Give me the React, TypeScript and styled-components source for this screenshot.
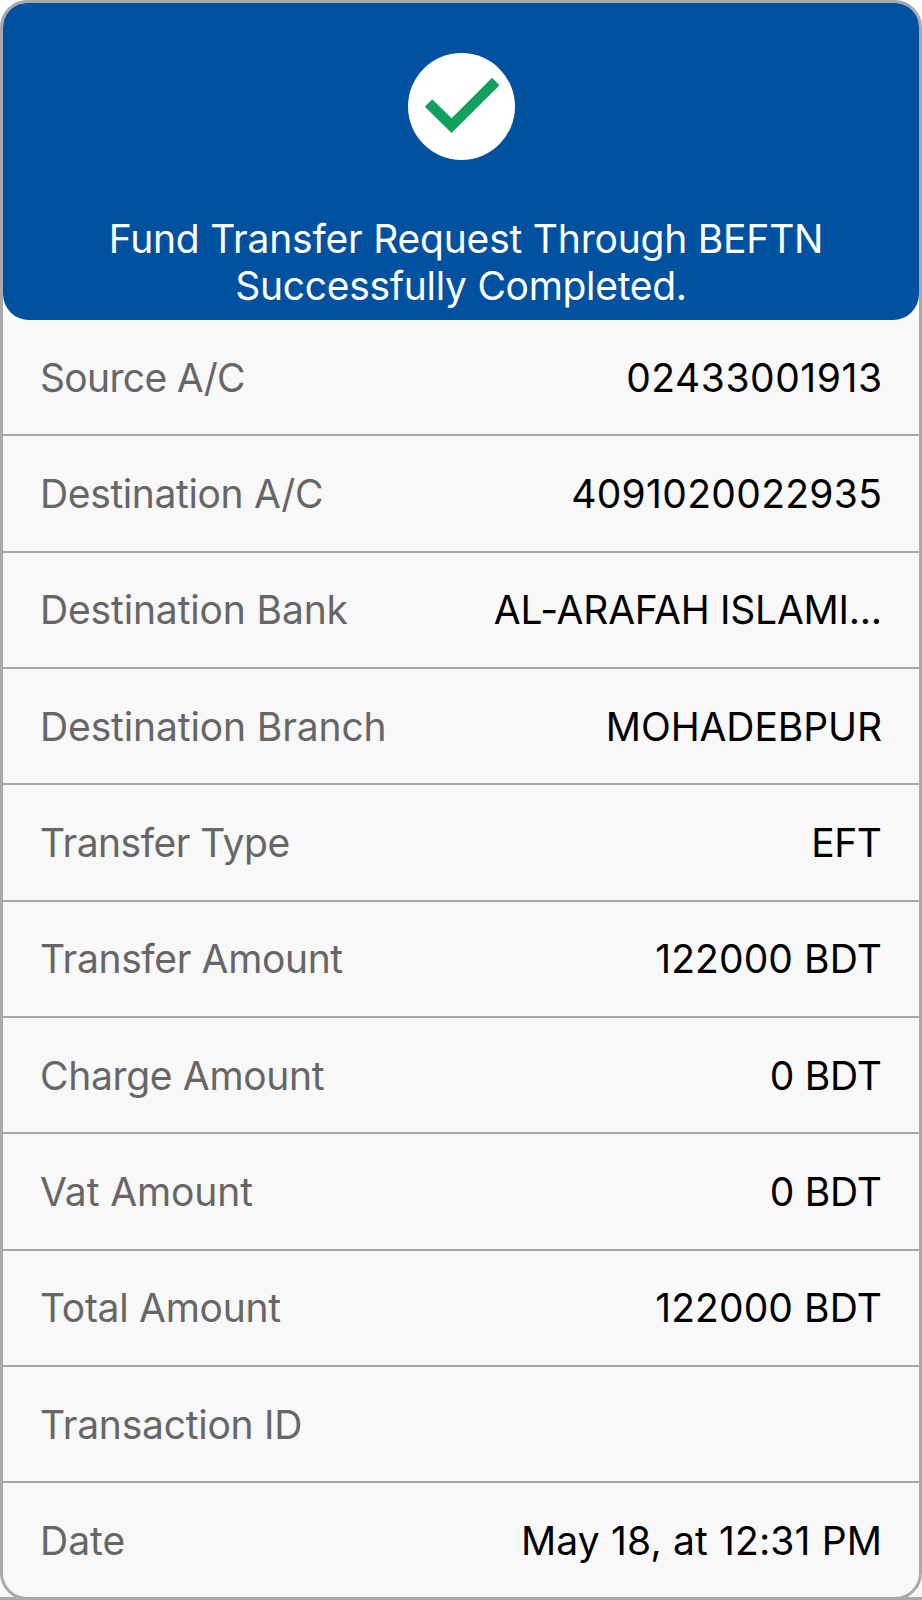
import React from "react";
import styled, { createGlobalStyle } from "styled-components";

const GlobalStyle = createGlobalStyle`
  * { box-sizing: border-box; }
  body { margin: 0; background: #fff; }
`;

const Page = styled.main`
  width: 922px;
  height: 1600px;
  overflow: hidden;
  border-bottom: 3px solid #a9a9a9;
  background: linear-gradient(#fff 50%, #f8f8f8 50%);
  font-family: Inter, "Liberation Sans", sans-serif;
  font-size: 39px;
  font-weight: 400;
`;

const Card = styled.section`
  display: flex;
  flex-direction: column;
  height: 1600px;
  border: 3px solid #a9a9a9;
  border-radius: 27px;
  background: #f8f8f8;
  overflow: hidden;
`;

const HeaderBacking = styled.div`
  flex: none;
  height: 317px;
  background: #fff;
`;

const Header = styled.header`
  display: flex;
  flex-direction: column;
  align-items: center;
  height: 317px;
  padding-top: 50px;
  border-radius: 0 0 26px 26px;
  background: #0052a0;
`;

const StatusIcon = styled.svg`
  display: block;
  width: 107px;
  height: 107px;
`;

const Title = styled.h1`
  margin: 55px 0 0;
  color: #fff;
  font-size: 39px;
  font-weight: 400;
  line-height: 47px;
  text-align: center;
`;

const TitleLine = styled.span<{ $tracking: number; $shift?: number }>`
  display: block;
  letter-spacing: ${(p) => p.$tracking}px;
  padding-left: ${(p) => p.$shift ?? 0}px;
  white-space: nowrap;
`;

const Details = styled.dl`
  flex: 1;
  display: flex;
  flex-direction: column;
  margin: 0;
`;

const Row = styled.div`
  display: flex;
  flex: none;
  align-items: center;
  justify-content: space-between;
  height: 116.33px;
  padding: 1px 37px 0 37px;
  border-bottom: 2px solid #a6a6a6;
  line-height: 48px;

  &:last-child { border-bottom-color: transparent; }
`;

const Label = styled.dt<{ $tracking: number }>`
  color: #666;
  letter-spacing: ${(p) => p.$tracking}px;
  white-space: nowrap;
`;

const Value = styled.dd<{ $tracking: number }>`
  margin: 0 ${(p) => -p.$tracking}px 0 0;
  color: #000;
  letter-spacing: ${(p) => p.$tracking}px;
  white-space: nowrap;
`;

type Detail = { label: string; labelTracking: number; value: string; valueTracking: number };

const details: Detail[] = [
  { label: "Source A/C", labelTracking: -0.68, value: "02433001913", valueTracking: 0.55 },
  { label: "Destination A/C", labelTracking: -0.36, value: "4091020022935", valueTracking: 0.32 },
  { label: "Destination Bank", labelTracking: -0.14, value: "AL-ARAFAH ISLAMI...", valueTracking: -0.25 },
  { label: "Destination Branch", labelTracking: -0.12, value: "MOHADEBPUR", valueTracking: -0.1 },
  { label: "Transfer Type", labelTracking: -0.5, value: "EFT", valueTracking: -0.5 },
  { label: "Transfer Amount", labelTracking: -0.36, value: "122000 BDT", valueTracking: 0.1 },
  { label: "Charge Amount", labelTracking: -0.33, value: "0 BDT", valueTracking: -0.25 },
  { label: "Vat Amount", labelTracking: -0.1, value: "0 BDT", valueTracking: -0.25 },
  { label: "Total Amount", labelTracking: -0.28, value: "122000 BDT", valueTracking: 0.1 },
  { label: "Transaction ID", labelTracking: -0.24, value: "", valueTracking: 0 },
  { label: "Date", labelTracking: 0, value: "May 18, at 12:31 PM", valueTracking: 0.15 },
];

export default function App() {
  return (
    <Page>
      <GlobalStyle />
      <Card>
        <HeaderBacking>
          <Header>
            <StatusIcon viewBox="0 0 107 107" aria-hidden="true">
              <circle cx="53.5" cy="53.5" r="53.5" fill="#fff" />
              <path d="M20.5 50L43.5 72.6L87.8 28.5" fill="none" stroke="#12a05c" strokeWidth="10.5" />
            </StatusIcon>
            <Title>
              <TitleLine $tracking={-0.21} $shift={10}>Fund Transfer Request Through BEFTN</TitleLine>
              <TitleLine $tracking={-0.3}>Successfully Completed.</TitleLine>
            </Title>
          </Header>
        </HeaderBacking>
        <Details>
          {details.map((d) => (
            <Row key={d.label}>
              <Label $tracking={d.labelTracking}>{d.label}</Label>
              <Value $tracking={d.valueTracking}>{d.value}</Value>
            </Row>
          ))}
        </Details>
      </Card>
    </Page>
  );
}
